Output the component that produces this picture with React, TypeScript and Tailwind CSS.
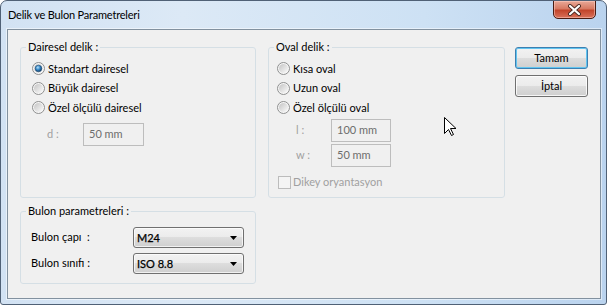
import React from 'react';

const Radio = ({ checked }: { checked?: boolean }) => (
  <svg width="13" height="13" viewBox="0 0 13 13" className="shrink-0">
    <defs>
      <linearGradient id="rb" x1="0" y1="0" x2="1" y2="1">
        <stop offset="0" stopColor="#c4c4c4" />
        <stop offset="1" stopColor="#fbfbfb" />
      </linearGradient>
      <radialGradient id="rd" cx="0.4" cy="0.35" r="0.65">
        <stop offset="0" stopColor="#b5e2fa" />
        <stop offset="0.55" stopColor="#2f82c4" />
        <stop offset="1" stopColor="#163f66" />
      </radialGradient>
    </defs>
    <circle cx="6.5" cy="6.5" r="6" fill="#f6f6f6" stroke="#8e8f8f" />
    <circle cx="6.5" cy="6.5" r="4.5" fill="url(#rb)" />
    {checked && <circle cx="6.5" cy="6.5" r="3.3" fill="url(#rd)" stroke="#1b4a73" strokeWidth="0.6" />}
  </svg>
);

const RadioRow = ({ label, checked }: { label: string; checked?: boolean }) => (
  <div className="flex items-center gap-[3px] h-[19.5px]">
    <Radio checked={checked} />
    <span className="leading-[16px]">{label}</span>
  </div>
);

const Field = ({ value, w }: { value: string; w: string }) => (
  <div className={`${w} h-[23px] border border-[#bdbdbd] bg-[#f0f0f0] flex items-center pl-[5px] pb-[1px] text-[#6d6d6d]`}>
    {value}
  </div>
);

const Combo = ({ value }: { value: string }) => (
  <div className="w-[111px] h-[21px] flex items-center justify-between pl-[3px] pr-[6px] rounded-[3px] border border-[#707070] bg-[linear-gradient(to_bottom,#f2f2f2_0%,#ebebeb_50%,#dddddd_50%,#cfcfcf_100%)] shadow-[inset_0_0_0_1px_rgba(255,255,255,0.7)]">
    <span className="leading-[16px] [-webkit-text-stroke:0.25px_#000]">{value}</span>
    <svg width="7" height="4" viewBox="0 0 7 4">
      <path d="M0 0h7L3.5 4z" fill="#000" />
    </svg>
  </div>
);

const Button = ({ label, focused }: { label: string; focused?: boolean }) => (
  <div
    className={
      focused
        ? 'h-[22px] flex items-center justify-center rounded-[3px] border border-[#3c7fb1] shadow-[inset_0_0_0_1px_#62c5f0] bg-[linear-gradient(to_bottom,#f2f2f2_0%,#ebebeb_50%,#dddddd_50%,#cfcfcf_100%)]'
        : 'h-[22px] flex items-center justify-center rounded-[3px] border border-[#707070] shadow-[inset_0_0_0_1px_rgba(255,255,255,0.8)] bg-[linear-gradient(to_bottom,#f2f2f2_0%,#ebebeb_50%,#dddddd_50%,#cfcfcf_100%)]'
    }
  >
    <span className="leading-[16px]">{label}</span>
  </div>
);

const App = () => {
  return (
    <div className="relative w-[607px] h-[305px] flex flex-col overflow-hidden rounded-t-[7px] rounded-b-[3px] border border-[#506176] bg-[linear-gradient(to_right,#d2e2f3,#dce9f6_30%,#cde1f4_70%,#bad3ee)] font-['Lato',sans-serif] text-[11px] text-black">
      <div className="h-[28px] flex items-start justify-between">
        <span className="pl-[7px] pt-[6px] leading-[16px] text-[11px] tracking-[-0.2px]">Delik ve Bulon Parametreleri</span>
        <div className="-mt-px mr-[10px] w-[43px] h-[19px] flex items-center justify-center rounded-b-[5px] border border-[#4a1c12] shadow-[inset_0_0_0_1px_rgba(255,210,200,0.5)] bg-[linear-gradient(to_bottom,#e9a998_0%,#d77a63_45%,#c2452b_55%,#d9715a_100%)]">
          <svg width="15" height="12" viewBox="0 0 15 12">
            <path d="M3 2l9 8M12 2l-9 8" stroke="#4b2a24" strokeWidth="4" strokeLinecap="round" />
            <path d="M3 2l9 8M12 2l-9 8" stroke="#fff" strokeWidth="2.2" strokeLinecap="round" />
          </svg>
        </div>
      </div>

      <div className="flex-1 ml-[6px] mr-[5px] mb-[5px] border border-[#82919f] shadow-[0_0_0_1px_rgba(255,255,255,0.5)] bg-[#f0f0f0] flex items-start pt-[10px] pl-[12px]">
        <div className="w-[236px] flex flex-col">
          <fieldset className="h-[158px] border border-[#d5dfe5] rounded-[3px] pt-[5px]">
            <legend className="ml-[5px] px-[2px] leading-[14px]">Dairesel delik :</legend>
            <div className="flex flex-col pl-[11px]">
              <RadioRow label="Standart dairesel" checked />
              <RadioRow label="Büyük dairesel" />
              <RadioRow label="Özel ölçülü dairesel" />
            </div>
            <div className="flex items-center mt-[5.5px] pl-[26px]">
              <span className="w-[36px] text-[#a0a0a0]">d :</span>
              <Field value="50 mm" w="w-[61px]" />
            </div>
          </fieldset>

          <fieldset className="mt-[6px] h-[80px] border border-[#d5dfe5] rounded-[3px] pt-[9px]">
            <legend className="ml-[5px] px-[2px] leading-[14px]">Bulon parametreleri :</legend>
            <div className="flex flex-col gap-[5px] pl-[10px]">
              <div className="flex items-center">
                <span className="w-[102px]">Bulon çapı&nbsp; :</span>
                <Combo value="M24" />
              </div>
              <div className="flex items-center">
                <span className="w-[102px]">Bulon sınıfı :</span>
                <Combo value="ISO 8.8" />
              </div>
            </div>
          </fieldset>
        </div>

        <fieldset className="ml-[12px] w-[237px] h-[158px] border border-[#d5dfe5] rounded-[3px] pt-[5px]">
          <legend className="ml-[5px] px-[2px] leading-[14px]">Oval delik :</legend>
          <div className="flex flex-col pl-[8px]">
            <RadioRow label="Kısa oval" />
            <RadioRow label="Uzun oval" />
            <RadioRow label="Özel ölçülü oval" />
          </div>
          <div className="flex flex-col gap-[2px] mt-[1.5px] pl-[27px]">
            <div className="flex items-center">
              <span className="w-[35px] text-[#a0a0a0]">l :</span>
              <Field value="100 mm" w="w-[60px]" />
            </div>
            <div className="flex items-center">
              <span className="w-[35px] text-[#a0a0a0]">w :</span>
              <Field value="50 mm" w="w-[60px]" />
            </div>
          </div>
          <div className="flex items-center gap-[2px] mt-[7px] pl-[9px]">
            <div className="w-[13px] h-[13px] border border-[#bcbcbc] bg-[#f4f4f4]" />
            <span className="leading-[16px] text-[#a0a0a0]">Dikey oryantasyon</span>
          </div>
        </fieldset>

        <div className="ml-[10px] mt-[7px] w-[73px] flex flex-col gap-[6px]">
          <Button label="Tamam" focused />
          <Button label="İptal" />
        </div>
      </div>

      <svg className="absolute left-[443px] top-[116px]" width="13" height="20" viewBox="0 0 13 20">
        <path d="M0.5 0.5v16l4-4 3 6 2-1-3-6h5.5z" fill="#fff" stroke="#000" strokeLinejoin="round" />
      </svg>
    </div>
  );
};

export default App;
